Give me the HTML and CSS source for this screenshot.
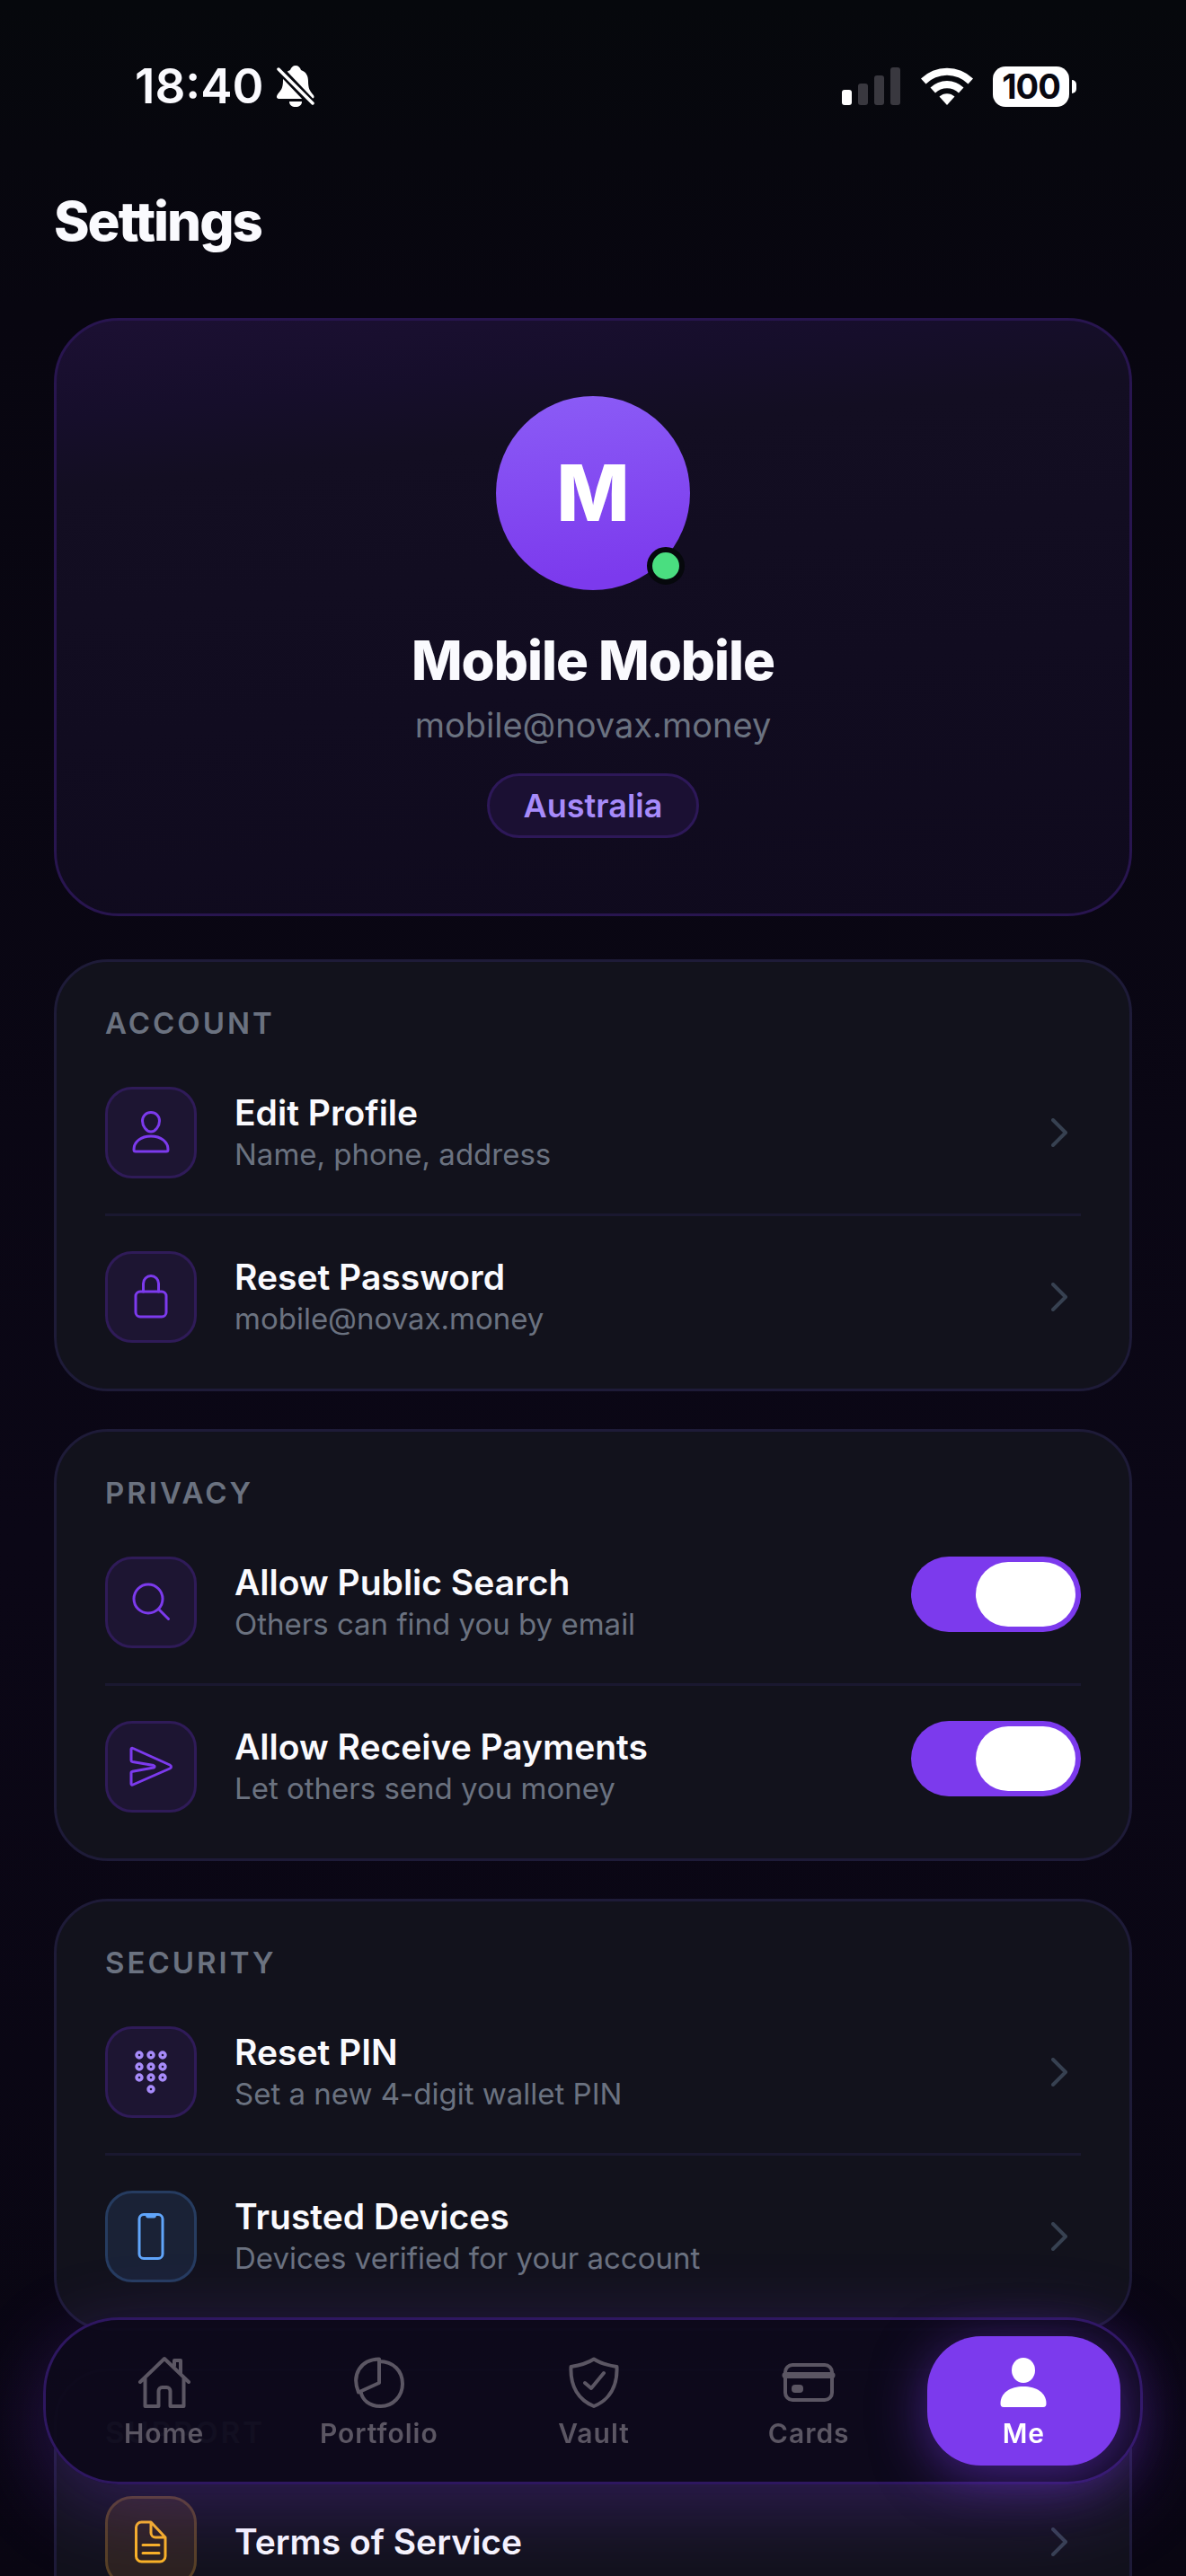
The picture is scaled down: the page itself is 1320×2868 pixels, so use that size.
FILE: index.html
```html
<!DOCTYPE html>
<html lang="en">
<head>
<meta charset="utf-8">
<meta name="viewport" content="width=device-width, initial-scale=1">
<title>Settings</title>
<link rel="stylesheet" href="styles.css">
</head>
<body>
<div class="app">
  <header class="status">
    <div class="status-left">
      <span class="clock">18:40</span>
      <svg class="bell" viewBox="0 0 42 46" aria-hidden="true">
        <path fill="#fff" d="M15 5C16 2 18 0 21 0s5 2 6 5c6 2 8 7 8 12 0 9 2 11 5 15 3 3 1 5-1 5H3c-3 0-4-2-2-5 3-4 6-6 6-15 0-5 2-10 8-12zM14 40h14c0 4-3 6-7 6s-7-2-7-6z"/>
        <path d="M2 3l38 40" stroke="#06070d" stroke-width="9"/>
        <path d="M2 4l38 38" stroke="#fff" stroke-width="3.5" stroke-linecap="round"/>
      </svg>
    </div>
    <div class="status-right">
      <svg class="signal" viewBox="0 0 66 42" aria-hidden="true">
        <rect x="0" y="25" width="11" height="17" rx="3" fill="#fff"/>
        <rect x="18" y="18" width="11" height="24" rx="3" fill="#39383f"/>
        <rect x="36" y="9" width="11" height="33" rx="3" fill="#39383f"/>
        <rect x="54" y="0" width="11" height="42" rx="3" fill="#39383f"/>
      </svg>
      <svg class="wifi" viewBox="0 0 58 42" fill="#fff" aria-hidden="true">
        <path d="M0 12.500a41.500 41.500 0 0 1 58 0l-5.500 6a33.500 33.500 0 0 0-47 0z"/>
        <path d="M10.500 22.500a26.800 26.800 0 0 1 37 0l-5.500 6a18.500 18.500 0 0 0-26 0z"/>
        <path d="M20.500 32.500a12.500 12.500 0 0 1 17 0L29 42z"/>
      </svg>
      <div class="battery"><span class="battery-body">100</span><span class="battery-cap"></span></div>
    </div>
  </header>

  <main class="content">
    <h1 class="page-title">Settings</h1>

    <section class="profile">
      <div class="avatar">M<span class="online"></span></div>
      <h2 class="name">Mobile Mobile</h2>
      <p class="email">mobile@novax.money</p>
      <span class="country">Australia</span>
    </section>

    <section class="card">
      <h2 class="card-title">ACCOUNT</h2>
      <a class="row" href="#profile">
        <span class="tile"><svg viewBox="0 0 54 54" class="icon"><path d="M27 4.500c5.500 0 9.500 4 9.500 9.500S32 26 27 26s-9.500-6.500-9.500-12S21.500 4.500 27 4.500z"/><path d="M8 46c0-9 8-15 19-15s19 6 19 15c0 1.500-1 2-2 2H10c-1 0-2-.5-2-2z"/></svg></span>
        <span class="copy"><span class="label">Edit Profile</span><span class="hint">Name, phone, address</span></span>
        <svg class="chevron" viewBox="0 0 18 32"><path d="M2 2l14 14L2 30"/></svg>
      </a>
      <a class="row" href="#password">
        <span class="tile"><svg viewBox="0 0 54 54" class="icon"><rect x="10" y="21" width="34" height="28" rx="5"/><path d="M18.500 21V12a8.500 8.500 0 0 1 17 0v9"/></svg></span>
        <span class="copy"><span class="label">Reset Password</span><span class="hint">mobile@novax.money</span></span>
        <svg class="chevron" viewBox="0 0 18 32"><path d="M2 2l14 14L2 30"/></svg>
      </a>
    </section>

    <section class="card">
      <h2 class="card-title">PRIVACY</h2>
      <label class="row">
        <span class="tile"><svg viewBox="0 0 54 54" class="icon"><circle cx="24" cy="23" r="16"/><path d="M35.500 34.500L46.500 45.500"/></svg></span>
        <span class="copy"><span class="label">Allow Public Search</span><span class="hint">Others can find you by email</span></span>
        <input class="switch" type="checkbox" checked>
      </label>
      <label class="row">
        <span class="tile"><svg viewBox="0 0 54 54" class="icon"><path d="M5 7.500c0-1 1-1.500 2-1L48 25c2 1 2 3 0 4L7 47c-1 .5-2 0-2-1V34c0-1 .5-1.500 1.500-1.700L30 28c1.500-.5 1.500-2 0-2.400L6.500 21.500C5.500 21.300 5 20.800 5 20z"/></svg></span>
        <span class="copy"><span class="label">Allow Receive Payments</span><span class="hint">Let others send you money</span></span>
        <input class="switch" type="checkbox" checked>
      </label>
    </section>

    <section class="card">
      <h2 class="card-title">SECURITY</h2>
      <a class="row" href="#pin">
        <span class="tile tile-lilac"><svg viewBox="0 0 54 54" class="icon"><g stroke-width="3.400"><circle cx="14" cy="8" r="3"/><circle cx="27" cy="8" r="3"/><circle cx="40" cy="8" r="3"/><circle cx="14" cy="21" r="3"/><circle cx="27" cy="21" r="3"/><circle cx="40" cy="21" r="3"/><circle cx="14" cy="33" r="3"/><circle cx="27" cy="33" r="3"/><circle cx="40" cy="33" r="3"/><circle cx="27" cy="46" r="3"/></g></svg></span>
        <span class="copy"><span class="label">Reset PIN</span><span class="hint">Set a new 4-digit wallet PIN</span></span>
        <svg class="chevron" viewBox="0 0 18 32"><path d="M2 2l14 14L2 30"/></svg>
      </a>
      <a class="row" href="#devices">
        <span class="tile tile-blue"><svg viewBox="0 0 54 54" class="icon"><rect x="14" y="2.500" width="26" height="49" rx="5"/><path d="M21 3h12c0 2.500-1 3.500-2.500 3.500h-7C22 6.500 21 5.500 21 3z" fill="currentColor" stroke="none"/></svg></span>
        <span class="copy"><span class="label">Trusted Devices</span><span class="hint">Devices verified for your account</span></span>
        <svg class="chevron" viewBox="0 0 18 32"><path d="M2 2l14 14L2 30"/></svg>
      </a>
    </section>

    <section class="card">
      <h2 class="card-title">SUPPORT</h2>
      <a class="row" href="#terms">
        <span class="tile tile-amber"><svg viewBox="0 0 54 54" class="icon"><path d="M10.500 11a6 6 0 0 1 6-6H27l16 17v21a6 6 0 0 1-6 6H16.500a6 6 0 0 1-6-6zM27 5v12a5 5 0 0 0 5 5h11M18 30.500h18M18 39.500h18"/></svg></span>
        <span class="label">Terms of Service</span>
        <svg class="chevron" viewBox="0 0 18 32"><path d="M2 2l14 14L2 30"/></svg>
      </a>
    </section>
  </main>

  <nav class="tabs">
    <a class="tab" href="#home"><svg viewBox="0 0 60 60"><path d="M3 30L30 4l27 26M8.500 26v31h15V40a4 4 0 0 1 4-4h5a4 4 0 0 1 4 4v17h15V26M41 12V6h7v15"/></svg>Home</a>
    <a class="tab" href="#portfolio"><svg viewBox="0 0 60 60"><path d="M30 4.500v26.500L7 41.500C-1 22 9 5 30 4.500zM30 7c16 0 26 11 26 25S45 57 32 57 11 50 9.500 40.500"/></svg>Portfolio</a>
    <a class="tab" href="#vault"><svg viewBox="0 0 60 60"><path d="M30 4.500c7 4.500 16 7 25.500 8.500C56.500 35 47 50 30 57 13 50 3.500 35 4.500 13 14 11.500 23 9 30 4.500zM20 31l7 6 14-17"/></svg>Vault</a>
    <a class="tab" href="#cards"><svg viewBox="0 0 60 60"><rect x="4" y="11" width="52" height="39" rx="8"/><path d="M4 22.500h52" stroke-width="7"/><rect x="12" y="34" width="11" height="7" rx="3" fill="currentColor" stroke-width="2"/></svg>Cards</a>
    <a class="tab tab-active" href="#me" aria-current="page"><svg viewBox="0 0 60 60"><g fill="currentColor" stroke="none"><ellipse cx="30" cy="17" rx="13" ry="14"/><path d="M4.500 54c0-12 11-19 25.500-19s25.500 7 25.500 19c0 2.500-1 4-3.500 4H8c-2.500 0-3.500-1.500-3.500-4z"/></g></svg>Me</a>
  </nav>
</div>
</body>
</html>
```
FILE: styles.css
```css
* { box-sizing: border-box; }

body {
  margin: 0;
  background: #080510;
  color: #fafafe;
  font-family: Inter, "Liberation Sans", sans-serif;
}

h1, h2, p { margin: 0; }
a { color: inherit; text-decoration: none; }

.app {
  height: 100vh;
  overflow-y: auto;
  scrollbar-width: none;
  background: linear-gradient(180deg, #06080c 0%, #080610 12%, #0b0716 60%, #090612 100%);
}

/* Status bar */
.status {
  display: flex;
  justify-content: space-between;
  align-items: center;
  height: 192px;
  padding: 0 122px 0 150px;
}
.status-left { display: flex; align-items: center; gap: 14px; }
.clock { font-size: 53px; font-weight: 600; line-height: 64px; }
.bell { width: 42px; height: 46px; }
.status-right { display: flex; align-items: center; gap: 22px; }
.signal { width: 66px; height: 42px; }
.wifi { width: 58px; height: 42px; }
.battery { display: flex; align-items: center; gap: 3px; }
.battery-body {
  width: 85px;
  height: 45px;
  border-radius: 14px;
  background: #fff;
  color: #080810;
  font-size: 38px;
  font-weight: 700;
  line-height: 45px;
  text-align: center;
  letter-spacing: -1px;
}
.battery-cap { width: 5px; height: 15px; border-radius: 0 8px 8px 0; background: #fff; }

/* Page */
.content { display: flex; flex-direction: column; gap: 42px; padding: 0 60px 300px; }
.page-title {
  padding: 18px 0 30px;
  font-size: 60px;
  font-weight: 800;
  line-height: 72px;
  letter-spacing: -2px;
}

.profile {
  display: flex;
  flex-direction: column;
  align-items: center;
  padding: 84px;
  border: 3px solid #28154f;
  border-radius: 72px;
  background: linear-gradient(174deg, #1c1033 0%, #160e2b 14%, #130e22 24%, #110c20 60%, #0f0a1d 100%);
  margin-bottom: 6px;
}
.avatar {
  position: relative;
  width: 216px;
  height: 216px;
  border-radius: 50%;
  background: linear-gradient(174deg, #8b5cf6, #7c3aed 90%);
  color: #fff;
  font-size: 86px;
  font-weight: 800;
  line-height: 216px;
  text-align: center;
}
.online {
  position: absolute;
  right: 6px;
  bottom: 6px;
  width: 42px;
  height: 42px;
  border: 6px solid #06080c;
  border-radius: 50%;
  background: #4ade80;
}
.name { margin-top: 42px; font-size: 60px; font-weight: 800; line-height: 72px; letter-spacing: -1px; }
.email { margin-top: 12px; color: #6b7280; font-size: 38px; line-height: 48px; }
.country {
  margin-top: 30px;
  padding: 0 38px;
  border: 3px solid #2d1858;
  border-radius: 36px;
  background: #1b1033;
  color: #a78bfa;
  font-size: 36px;
  font-weight: 600;
  line-height: 66px;
}

.card {
  padding: 48px 54px 12px;
  border: 3px solid #1e1b38;
  border-radius: 60px;
  background: #12121c;
}
.card-title {
  margin-bottom: 12px;
  color: #6b7280;
  font-size: 33px;
  font-weight: 600;
  line-height: 40px;
  letter-spacing: 3px;
}
.row { display: flex; align-items: center; padding: 39px 0; }
.row + .row { border-top: 3px solid #1a1830; }
.tile {
  display: grid;
  place-items: center;
  width: 102px;
  height: 102px;
  margin-right: 42px;
  border: 3px solid #2f1b58;
  border-radius: 30px;
  background: #1d1532;
  color: #7c3aed;
}
.tile-lilac { color: #a78bfa; }
.tile-blue { color: #60a5fa; border-color: #263c60; background: #1a2236; }
.tile-amber { color: #fbb424; border-color: #574024; background: #2c221f; }
.icon {
  width: 54px;
  height: 54px;
  fill: none;
  stroke: currentColor;
  stroke-width: 3;
  stroke-linecap: round;
  stroke-linejoin: round;
}
.copy { display: flex; flex: 1; flex-direction: column; }
.label { flex: 1; font-size: 39px; font-weight: 600; line-height: 48px; }
.hint { color: #6b7280; font-size: 33px; line-height: 44px; }
.chevron {
  width: 18px;
  height: 32px;
  margin-right: 15px;
  fill: none;
  stroke: #374151;
  stroke-width: 4;
  stroke-linecap: round;
  stroke-linejoin: round;
}
.switch {
  appearance: none;
  display: flex;
  align-self: flex-start;
  justify-content: flex-end;
  width: 189px;
  height: 84px;
  margin: 0;
  padding: 6px;
  border-radius: 42px;
  background: #7c3aed;
}
.switch::before { content: ""; width: 111px; border-radius: 36px; background: #fff; }
.switch:not(:checked) { justify-content: flex-start; background: #374151; }

/* Tab bar floats over the scrolling list */
.tabs {
  position: fixed;
  right: 48px;
  bottom: 102px;
  left: 48px;
  display: flex;
  gap: 24px;
  padding: 18px 22px 18px 24px;
  border: 3px solid #2e1760;
  border-radius: 84px;
  background: rgba(14, 9, 27, 0.95);
  box-shadow: 0 24px 90px rgba(124, 58, 237, 0.28);
}
.tab {
  display: flex;
  flex: 1;
  flex-direction: column;
  align-items: center;
  gap: 8px;
  height: 144px;
  padding-top: 21px;
  border-radius: 60px;
  color: #5b5663;
  font-size: 30px;
  font-weight: 600;
  line-height: 38px;
  letter-spacing: 1px;
}
.tab svg {
  width: 60px;
  height: 60px;
  fill: none;
  stroke: currentColor;
  stroke-width: 4;
  stroke-linecap: round;
  stroke-linejoin: round;
}
.tab-active {
  background: #7c3aed;
  color: #fff;
  box-shadow: 0 12px 60px rgba(124, 58, 237, 0.5);
}
```
